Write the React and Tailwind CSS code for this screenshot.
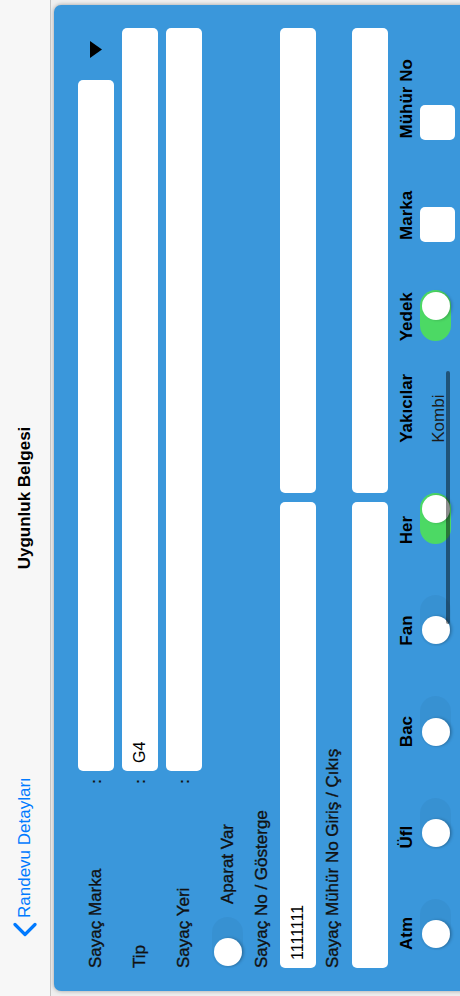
import React from "react";

function Switch({ on }) {
  return (
    <div
      className={
        on
          ? "w-[51px] h-[31px] rounded-full bg-[#4cd964] flex items-center justify-end px-[1.5px]"
          : "w-[51px] h-[31px] rounded-full bg-black/[0.04] flex items-center justify-start px-[1.5px]"
      }
    >
      <div className="w-[28px] h-[28px] rounded-full bg-white shadow-[0_2px_3px_rgba(0,0,0,0.22)]" />
    </div>
  );
}

function Box() {
  return <div className="w-[35px] h-[35px] rounded-[5px] bg-white -ml-[2px]" />;
}

function TableRow({ onHer, onYedek, kombi }) {
  return (
    <>
      <div><Switch on={false} /></div>
      <div><Switch on={false} /></div>
      <div><Switch on={false} /></div>
      <div><Switch on={false} /></div>
      <div><Switch on={onHer} /></div>
      <div className="pt-[9px] text-[17px] leading-[20px] text-[#1c1c1c]">{kombi}</div>
      <div><Switch on={onYedek} /></div>
      <div><Box /></div>
      <div><Box /></div>
    </>
  );
}

function Input({ value, className = "" }) {
  return (
    <div className={"h-9 rounded-[5px] bg-white flex items-center px-[8px] text-[16px] text-black " + className}>
      {value}
    </div>
  );
}

const labelCls = "text-[17px] leading-[20px] text-[#111] [-webkit-text-stroke:0.35px_#111]";

function LabeledRow({ label, value, dropdown }) {
  return (
    <div className="h-9 flex items-center">
      <div className={"w-[184px] " + labelCls}>{label}</div>
      <div className="w-[13px] text-[15px] font-bold leading-[20px] text-[#111]">:</div>
      <Input value={value} className="flex-1" />
      {dropdown && (
        <div className="w-[52px] flex items-center justify-center pl-[8px]">
          <svg width="17" height="12" viewBox="0 0 17 12">
            <polygon points="0,0 17,0 8.5,12" fill="#000" />
          </svg>
        </div>
      )}
    </div>
  );
}

export default function App() {
  const cols = ["Atm", "Üfl", "Bac", "Fan", "Her", "Yakıcılar", "Yedek", "Marka", "Mühür No"];
  return (
    <div className="w-[460px] h-[996px] overflow-hidden bg-[#efefef]">
      <div className="w-[996px] h-[460px] origin-top-left [transform:translateY(996px)_rotate(-90deg)] flex flex-col font-['Liberation_Sans',Arial,sans-serif]">
        <div className="h-[51px] shrink-0 bg-[#f7f7f7] border-b border-[#c4c4c4] grid grid-cols-[1fr_auto_1fr] items-center">
          <div className="flex items-center pl-[59px] text-[#007aff] text-[17px]">
            <svg width="15" height="24" viewBox="0 0 15 24" className="mr-[4px]">
              <path d="M12.5 2 L2.5 12 L12.5 22" fill="none" stroke="#007aff" strokeWidth="3.2" strokeLinecap="round" strokeLinejoin="round" />
            </svg>
            <span>Randevu Detayları</span>
          </div>
          <div className="text-[17px] font-bold text-black">Uygunluk Belgesi</div>
          <div />
        </div>
        <div className="flex-1 overflow-hidden px-[5px] pt-[3px]">
          <div className="relative h-[600px] rounded-[7px] bg-[#3a97db] shadow-[0_0_4px_rgba(0,0,0,0.35)] pl-[23px] pr-[23px] pt-[24px] flex flex-col">
            <div className="flex flex-col gap-2">
              <LabeledRow label="Sayaç Marka" value="" dropdown />
              <LabeledRow label="Tip" value="G4" />
              <LabeledRow label="Sayaç Yeri" value="" />
            </div>
            <div className="mt-[10px] flex items-center">
              <Switch on={false} />
              <div className={"ml-[13px] " + labelCls}>Aparat Var</div>
            </div>
            <div className={"mt-[9px] " + labelCls}>Sayaç No / Gösterge</div>
            <div className="mt-[8px] grid grid-cols-2 gap-[9px]">
              <Input value="1111111" />
              <Input value="" />
            </div>
            <div className={"mt-[7px] " + labelCls}>Sayaç Mühür No Giriş / Çıkış</div>
            <div className="mt-[9px] grid grid-cols-2 gap-[9px]">
              <Input value="" />
              <Input value="" />
            </div>
            <div className="mt-[9px] ml-[18px] w-[913px] grid grid-cols-9">
              {cols.map((c) => (
                <div key={c} className="text-[17px] leading-[20px] font-bold text-black">{c}</div>
              ))}
            </div>
            <div className="mt-[3px] ml-[18px] w-[913px] grid grid-cols-9">
              <TableRow onHer onYedek kombi="Kombi" />
            </div>
            <div className="mt-[5px] ml-[18px] w-[913px] grid grid-cols-9">
              <TableRow onHer={false} onYedek={false} kombi="" />
            </div>
            <div className="absolute left-[367px] top-[392px] w-[253px] h-[4px] rounded-full bg-black/45" />
          </div>
        </div>
      </div>
    </div>
  );
}
